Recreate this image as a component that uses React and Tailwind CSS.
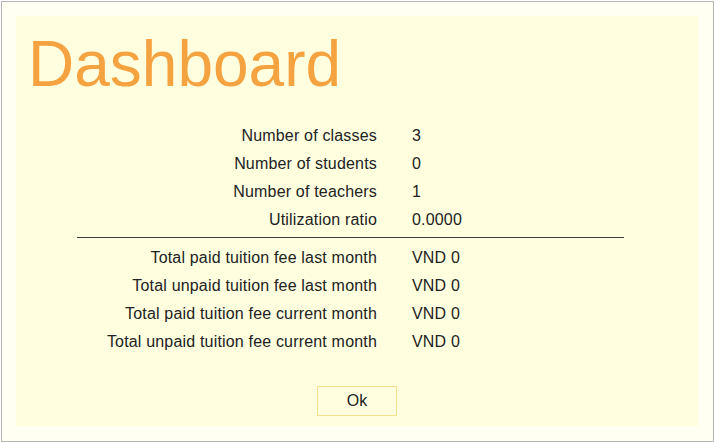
import React from "react";

const group1 = [
  ["Number of classes", "3"],
  ["Number of students", "0"],
  ["Number of teachers", "1"],
  ["Utilization ratio", "0.0000"],
];
const group2 = [
  ["Total paid tuition fee last month", "VND 0"],
  ["Total unpaid tuition fee last month", "VND 0"],
  ["Total paid tuition fee current month", "VND 0"],
  ["Total unpaid tuition fee current month", "VND 0"],
];

function Row({ label, value }) {
  return (
    <div className="flex h-[28px] items-center leading-[28px]">
      <div className="w-[300px] text-right">{label}</div>
      <div className="pl-[35px]">{value}</div>
    </div>
  );
}

export default function App() {
  return (
    <div
      className="ml-px mt-px w-[713px] h-[441px] border border-[#b4b4b4] bg-[#fffff2] pt-[14px] pl-[14px] pr-[15px] pb-[15px] box-border"
      style={{ fontFamily: '"Liberation Sans", Arial, sans-serif' }}
    >
      <div className="w-[682px] h-[410px] bg-[#ffffe0] flex flex-col pt-[16px]">
        <div className="pl-[12px] h-[64px] text-[64px] leading-none text-[#f5a340]">
          Dashboard
        </div>
        <div className="ml-[61px] w-[547px] mt-[26px] text-[16px] tracking-[0.18px] text-[#222222]">
          {group1.map(([l, v]) => (
            <Row key={l} label={l} value={v} />
          ))}
          <div className="mt-[3px] mb-[6px] h-px bg-[#404040]" />
          {group2.map(([l, v]) => (
            <Row key={l} label={l} value={v} />
          ))}
        </div>
        <div className="flex justify-center mt-[30px]">
          <button className="w-[80px] h-[30px] border border-[#f8e08e] bg-[#ffffe0] text-[16px] text-[#222222] leading-none">
            Ok
          </button>
        </div>
      </div>
    </div>
  );
}
